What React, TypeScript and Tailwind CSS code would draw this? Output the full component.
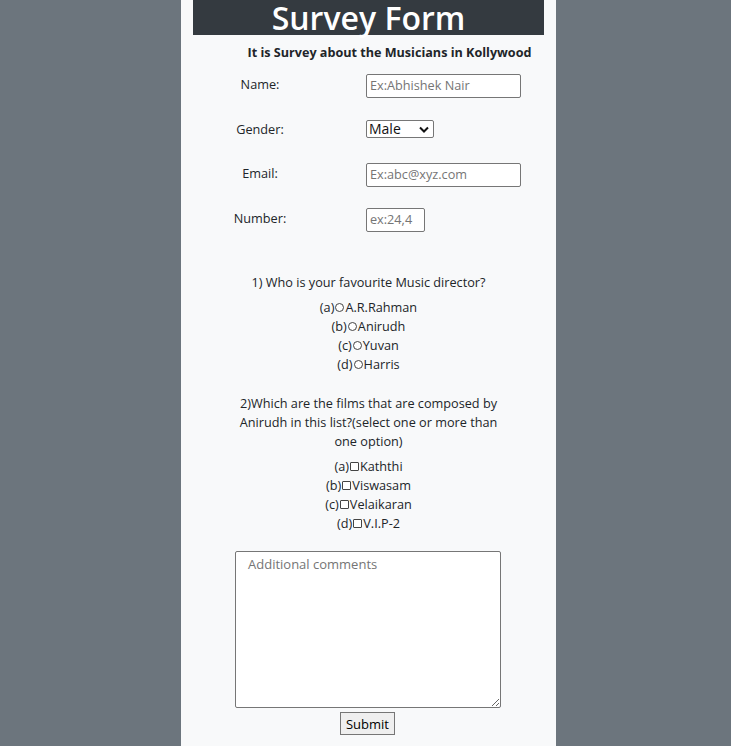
import React from "react";

const font = { fontFamily: '"Open Sans", "Noto Sans", "Liberation Sans", sans-serif' };

function Radio({ letter, label }: { letter: string; label: string }) {
  return (
    <div className="flex items-center justify-center h-[19px]">
      <span>({letter})</span>
      <span className="inline-block w-[9px] h-[9px] rounded-full border border-[#444] bg-white mx-[1px]" />
      <span>{label}</span>
    </div>
  );
}

function Check({ letter, label }: { letter: string; label: string }) {
  return (
    <div className="flex items-center justify-center h-[19px]">
      <span>({letter})</span>
      <span className="inline-block w-[9px] h-[9px] rounded-[1px] border border-[#444] bg-white mx-[1px]" />
      <span>{label}</span>
    </div>
  );
}

export default function App() {
  return (
    <div className="min-h-screen bg-[#6c757d] flex justify-center pl-[6px]" style={font}>
      <div className="w-[375px] bg-[#f8f9fa] px-[12px] min-h-[736px] text-[#212529] text-[12.7px] pb-[1px]">
        <div className="h-[35px] bg-[#343a40] text-white text-center text-[32px] leading-[36px] font-semibold">
          Survey Form
        </div>
        <div className="mt-[9px] h-[17px] leading-[17px] text-center font-bold text-[12.6px] pl-[42px]">
          It is Survey about the Musicians in Kollywood
        </div>

        <div className="mt-[13px] flex items-center h-[24px]">
          <div className="w-[80px] ml-[27px] text-center -mt-[2px]">Name:</div>
          <div className="ml-[66px] w-[155px] h-[24px] border border-[#767676] rounded-[2px] bg-white flex items-center px-[3px] text-[#757575]">
            Ex:Abhishek Nair
          </div>
        </div>

        <div className="mt-[19px] flex items-center h-[24px]">
          <div className="w-[80px] ml-[27px] text-center mt-[1px]">Gender:</div>
          <div className="ml-[66px] w-[68px] h-[18px] border border-[#767676] rounded-[2px] bg-white flex items-center justify-between pl-[2px] pr-[4px] text-[#111] text-[14px]">
            <span className="leading-[16px]">Male</span>
            <svg width="10" height="7" viewBox="0 0 10 7">
              <path d="M1 1.5 L5 5.5 L9 1.5" fill="none" stroke="#111" strokeWidth="2" />
            </svg>
          </div>
        </div>

        <div className="mt-[22px] flex items-center h-[24px]">
          <div className="w-[80px] ml-[27px] text-center -mt-[2px]">Email:</div>
          <div className="ml-[66px] w-[155px] h-[24px] border border-[#767676] rounded-[2px] bg-white flex items-center px-[3px] text-[#757575]">
            Ex:abc@xyz.com
          </div>
        </div>

        <div className="mt-[21px] flex items-center h-[24px]">
          <div className="w-[80px] ml-[27px] text-center -mt-[2px]">Number:</div>
          <div className="ml-[66px] w-[59px] h-[24px] border border-[#767676] rounded-[2px] bg-white flex items-center px-[3px] text-[#757575]">
            ex:24,4
          </div>
        </div>

        <div className="mt-[41px] leading-[19px] text-center">
          1) Who is your favourite Music director?
        </div>
        <div className="mt-[6px] leading-[19px]">
          <Radio letter="a" label="A.R.Rahman" />
          <Radio letter="b" label="Anirudh" />
          <Radio letter="c" label="Yuvan" />
          <Radio letter="d" label="Harris" />
        </div>

        <div className="mt-[20px] leading-[19px] text-center w-[266px] mx-auto">
          2)Which are the films that are composed by Anirudh in this list?(select one or more than one option)
        </div>
        <div className="mt-[6px] leading-[19px]">
          <Check letter="a" label="Kaththi" />
          <Check letter="b" label="Viswasam" />
          <Check letter="c" label="Velaikaran" />
          <Check letter="d" label="V.I.P-2" />
        </div>

        <div className="mt-[18px] flex justify-center pr-[1px]">
          <textarea
            placeholder="Additional comments"
            className="w-[266px] h-[157px] border border-[#767676] rounded-[2px] bg-white px-[12px] py-[3px] text-[13px] placeholder:text-[#757575] resize block"
            style={font}
          />
        </div>
        <div className="mt-[4px] flex justify-center pr-[2px]">
          <button className="w-[55px] h-[23px] bg-[#efefef] border border-[#767676] text-[13px] text-black leading-[20px]">
            Submit
          </button>
        </div>
      </div>
    </div>
  );
}
